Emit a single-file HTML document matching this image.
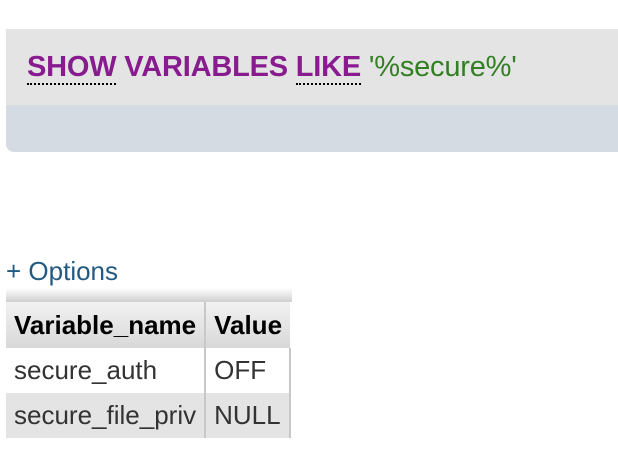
<!DOCTYPE html>
<html><head><style>
body{margin:0;width:618px;height:468px;background:#fff;font-family:"Liberation Sans",Arial,sans-serif;position:relative;overflow:hidden}
.box{position:absolute;left:6px;top:29px;width:640px;height:123px;background:#d5dbe2;border-radius:0 0 0 8px;overflow:hidden}
.top{height:76px;background:#e4e4e4;position:relative}
.sql{position:absolute;left:21px;top:22px;font-size:29px;font-weight:bold;color:#881c8f;letter-spacing:-0.2px;white-space:nowrap}
.u{border-bottom:2px dotted #000;padding-bottom:0}
.str{color:#338024;font-weight:normal}
.opt{position:absolute;left:6px;top:256px;font-size:26px;color:#235a81}
.grad{position:absolute;left:6px;top:288px;width:286px;height:14px;background:linear-gradient(#fff,#cfcfcf)}
table{position:absolute;left:6px;top:302px;border-collapse:collapse;font-size:26px}
td,th{padding:0 8px;height:45px;text-align:left;white-space:nowrap}
th{background:linear-gradient(#f2f2f2,#d8d8d8);color:#000;font-weight:bold;height:46px}
th+th,td+td{border-left:2px solid #c8c8c8}
tr.a td{background:#fff;color:#333}
tr.b td{background:#e4e4e4;color:#333}
td:last-child{border-right:2px solid #c8c8c8}
</style></head><body>
<div class="box"><div class="top"><div class="sql"><span class="u">SHOW</span> VARIABLES <span class="u">LIKE</span> <span class="str">'%secure%'</span></div></div></div>
<div class="opt">+ Options</div>
<div class="grad"></div>
<table>
<tr><th style="width:186px;padding-right:0">Variable_name</th><th style="width:68px;padding-right:0">Value</th></tr>
<tr class="a"><td>secure_auth</td><td>OFF</td></tr>
<tr class="b"><td>secure_file_priv</td><td>NULL</td></tr>
</table>
</body></html>
